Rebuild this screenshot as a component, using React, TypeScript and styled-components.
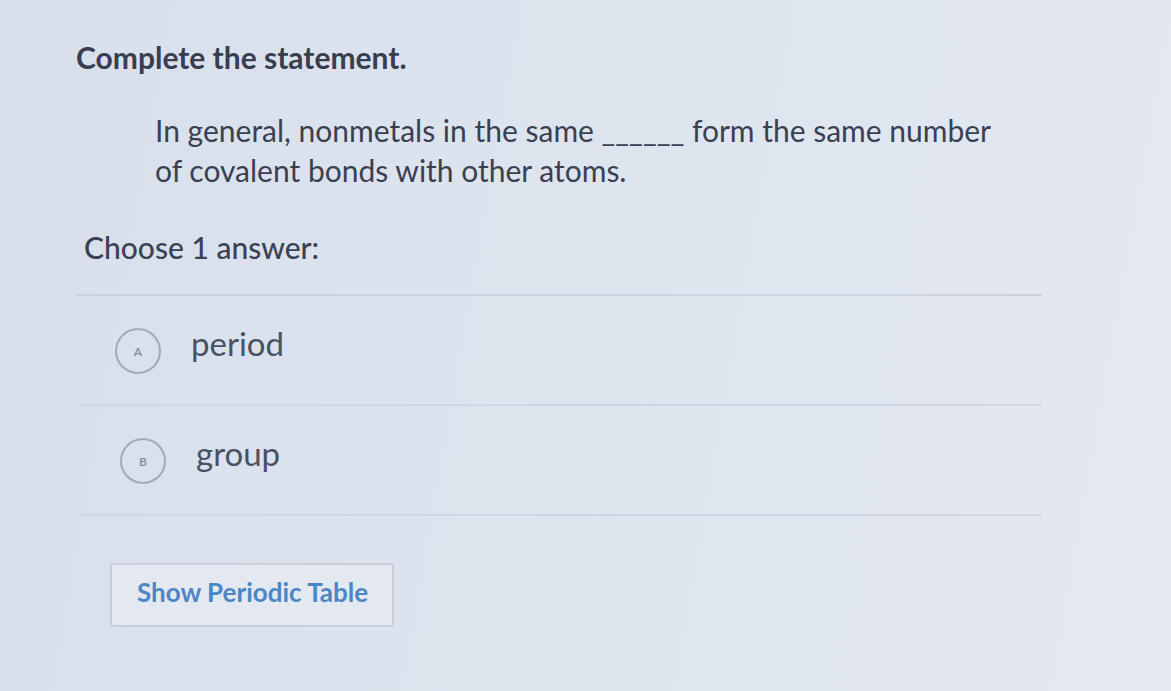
import styled, { createGlobalStyle } from 'styled-components'

const Global = createGlobalStyle`
  html, body {
    margin: 0;
    padding: 0;
    background: #dce3ed;
  }
  body {
    font-family: Lato, "Open Sans", sans-serif;
    color: #3a3f52;
  }
`

const Page = styled.div`
  width: 1171px;
  height: 691px;
  box-sizing: border-box;
  padding: 39px 0 0 76px;
  background: linear-gradient(100deg, #d7dfeb 0%, #dde4ee 45%, #e4e9f1 100%);
  overflow: hidden;
`

const Title = styled.h1`
  margin: 0;
  font-size: 30px;
  font-weight: 700;
  line-height: 36px;
  color: #383d51;
`

const Statement = styled.p`
  margin: 35px 0 0 79px;
  width: 860px;
  font-size: 30px;
  line-height: 40px;
  color: #3a3f52;
`

const Prompt = styled.h2`
  margin: 39px 0 0 8px;
  font-size: 30px;
  font-weight: 500;
  line-height: 36px;
  color: #3b4054;
`

const Choices = styled.ul`
  list-style: none;
  margin: 29px 0 0;
  padding: 0;
  width: 966px;
  border-top: 2px solid #ccd3df;
`

const Choice = styled.li<{ indent: number }>`
  display: flex;
  align-items: flex-start;
  gap: 30px;
  height: 110px;
  box-sizing: border-box;
  padding: 27px 0 0 ${(p) => p.indent}px;
  border-bottom: 2px solid #d0d7e2;
`

const Letter = styled.span`
  width: 46px;
  height: 46px;
  box-sizing: border-box;
  border: 2px solid #a2a9b8;
  border-radius: 50%;
  display: flex;
  align-items: center;
  justify-content: center;
  font-size: 12px;
  font-weight: 700;
  color: #8a91a2;
  margin-top: 5px;
`

const ChoiceText = styled.span`
  font-size: 33px;
  line-height: 40px;
  color: #4a5066;
`

const TableButton = styled.button`
  margin: 47px 0 0 34px;
  width: 284px;
  height: 64px;
  background: #e4e9f1;
  border: 2px solid #c8cfdb;
  border-radius: 3px;
  font-family: Lato, sans-serif;
  font-size: 26px;
  font-weight: 700;
  color: #4d86c6;
  text-align: left;
  padding: 0 0 6px 25px;
`

const App = () => {
  return (
    <Page>
      <Global />
      <Title>Complete the statement.</Title>
      <Statement>
        In general, nonmetals in the same ______ form the same number of covalent bonds with other atoms.
      </Statement>
      <Prompt>Choose 1 answer:</Prompt>
      <Choices>
        <Choice indent={39}>
          <Letter>A</Letter>
          <ChoiceText>period</ChoiceText>
        </Choice>
        <Choice indent={44}>
          <Letter>B</Letter>
          <ChoiceText>group</ChoiceText>
        </Choice>
      </Choices>
      <TableButton>Show Periodic Table</TableButton>
    </Page>
  )
}

export default App
